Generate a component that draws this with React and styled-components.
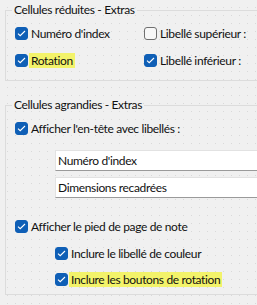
import React from "react";
import styled, { createGlobalStyle } from "styled-components";

const Global = createGlobalStyle`
  html, body { margin: 0; padding: 0; }
  body {
    background-color: #f0f0f0;
    background-image:
      linear-gradient(90deg, #f0f0f0 7px, transparent 7px),
      linear-gradient(#f0f0f0 7px, #d9d9d9 7px);
    background-size: 8px 8px;
    font-family: Lato, "Noto Sans", sans-serif;
    font-size: 12px;
    letter-spacing: -0.35px;
    color: #111;
    overflow: hidden;
  }
`;

const Page = styled.div`
  display: flex;
  flex-direction: column;
  gap: 16px;
  padding: 2px 0 0 5px;
`;

const Group = styled.fieldset`
  margin: 0;
  padding: 0;
  min-width: 0;
  border: 1px solid #dcdcdc;
  border-right: none;
`;

const Legend = styled.legend`
  margin-left: 6px;
  padding: 0 2px;
  font-size: 12px;
  line-height: 16px;
`;

const Grid = styled.div`
  display: grid;
  grid-template-columns: 129px auto;
  row-gap: 12px;
  padding: 8px 0 12px 9px;
`;

const Stack = styled.div`
  display: flex;
  flex-direction: column;
  padding: 8px 0 7px 9px;
`;

const Row = styled.label`
  display: flex;
  align-items: center;
  height: 15px;
  margin-left: ${(p) => (p.$indent ? "40px" : "0")};
  margin-top: ${(p) => p.$mt || 0}px;
`;

const Box = styled.span`
  flex: none;
  width: 13px;
  height: 13px;
  box-sizing: border-box;
  border-radius: 3px;
  display: flex;
  align-items: center;
  justify-content: center;
  background: ${(p) => (p.$checked ? "#0f5fb6" : "#f7f7f7")};
  border: 1px solid ${(p) => (p.$checked ? "#0f5fb6" : "#6f6f6f")};
`;

const Text = styled.span`
  margin-left: 1px;
  padding: 0 2px;
  line-height: 15px;
  white-space: nowrap;
  background: ${(p) => (p.$hl ? "#f3f36a" : "transparent")};
`;

const Field = styled.input`
  display: block;
  margin: ${(p) => p.$mt}px 0 0 40px;
  height: 21px;
  box-sizing: border-box;
  padding: 0 2px;
  border: 1px solid #e2e2e2;
  border-bottom-color: #9a9a9a;
  border-right: none;
  background: #fff;
  font-family: Lato, "Noto Sans", sans-serif;
  font-size: 12px;
  letter-spacing: -0.35px;
  color: #111;
  outline: none;
`;

function Check({ checked }) {
  return (
    <Box $checked={checked}>
      {checked && (
        <svg width="9" height="7" viewBox="0 0 9 7">
          <path d="M1 3.6 L3.2 5.7 L8 1" fill="none" stroke="#fff" strokeWidth="1.1" />
        </svg>
      )}
    </Box>
  );
}

function Option({ checked = true, label, hl, indent, mt }) {
  return (
    <Row $indent={indent} $mt={mt}>
      <Check checked={checked} />
      <Text $hl={hl}>{label}</Text>
    </Row>
  );
}

export default function App() {
  return (
    <>
      <Global />
      <Page>
        <Group>
          <Legend>Cellules réduites - Extras</Legend>
          <Grid>
            <Option label="Numéro d'index" />
            <Option checked={false} label="Libellé supérieur :" />
            <Option label="Rotation" hl />
            <Option label="Libellé inférieur :" />
          </Grid>
        </Group>
        <Group>
          <Legend>Cellules agrandies - Extras</Legend>
          <Stack>
            <Option label="Afficher l'en-tête avec libellés :" />
            <Field $mt={14} readOnly value="Numéro d'index" />
            <Field $mt={6} readOnly value="Dimensions recadrées" />
            <Option label="Afficher le pied de page de note" mt={21} />
            <Option label="Inclure le libellé de couleur" indent mt={12} />
            <Option label="Inclure les boutons de rotation" indent hl mt={11} />
          </Stack>
        </Group>
      </Page>
    </>
  );
}
